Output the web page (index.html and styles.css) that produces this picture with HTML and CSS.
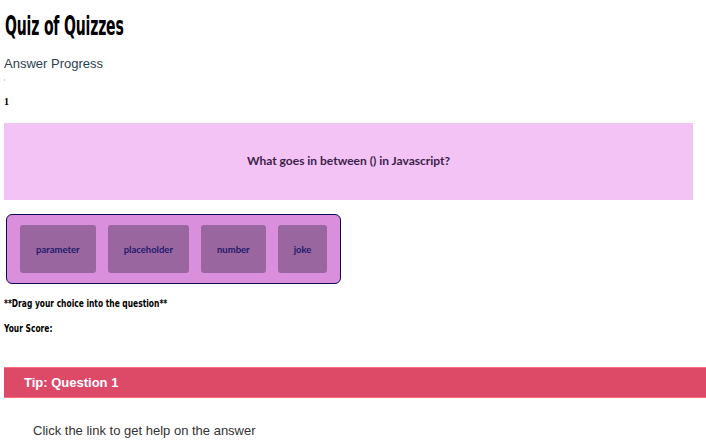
FILE: index.html
```html
<!DOCTYPE html>
<html lang="en">
<head>
<meta charset="utf-8">
<title>Quiz of Quizzes</title>
<link rel="stylesheet" href="styles.css">
</head>
<body>
<h1 class="title"><span class="condensed title-text">Quiz of Quizzes</span></h1>
<p class="progress-label">Answer Progress</p>
<div class="progress-bar"></div>
<p class="question-number">1</p>
<div class="question-box">
  <p class="question-text">What goes in between () in Javascript?</p>
</div>
<div class="choices">
  <div class="choice">parameter</div>
  <div class="choice">placeholder</div>
  <div class="choice">number</div>
  <div class="choice">joke</div>
</div>
<p class="hint"><span class="condensed small-text">**Drag your choice into the question**</span></p>
<p class="score"><span class="condensed small-text">Your Score:</span></p>
<div class="tip-bar">Tip: Question 1</div>
<p class="tip-body">Click the link to get help on the answer</p>
</body>
</html>
```
FILE: styles.css
```css
html, body {
  margin: 0;
  padding: 0;
  background: #ffffff;
}
body {
  padding: 0 0 0 4px;
  font-family: "Liberation Sans", Arial, sans-serif;
  overflow: hidden;
}
.condensed {
  display: inline-block;
  font-family: "DejaVu Sans Condensed", "DejaVu Sans", sans-serif;
  font-weight: bold;
  transform-origin: left center;
  white-space: nowrap;
}
.title {
  margin: 10px 0 0 1px;
  height: 32px;
  font-size: 26px;
  line-height: 32px;
  color: #000;
}
.title-text {
  transform: scaleX(0.6);
  letter-spacing: -0.3px;
}
.progress-label {
  margin: 14px 0 0 0;
  font-size: 13px;
  line-height: 16px;
  color: #2c3e50;
}
.progress-bar {
  margin-top: 7px;
  width: 1px;
  height: 2px;
  background: #b8d4e8;
}
.question-number {
  margin: 15px 0 0 0;
  font-family: "Liberation Serif", serif;
  font-weight: bold;
  font-size: 10px;
  line-height: 12px;
  color: #000;
}
.question-box {
  margin-top: 15px;
  width: 689px;
  height: 77px;
  background: #f3c3f5;
  display: flex;
  align-items: center;
  justify-content: center;
}
.question-text {
  margin: 0 0 2px 0;
  font-family: Lato, "Open Sans", sans-serif;
  font-weight: bold;
  font-size: 12px;
  color: #3b1e4a;
}
.choices {
  margin: 14px 0 0 2px;
  width: max-content;
  display: flex;
  gap: 12px;
  padding: 10px 13px;
  background: #d98fdb;
  border: 1px solid #0c0a52;
  border-radius: 6px;
}
.choice {
  height: 48px;
  display: flex;
  align-items: center;
  justify-content: center;
  padding: 0 16px;
  background: #9a669f;
  border-radius: 3px;
  font-family: Lato, "Open Sans", sans-serif;
  font-weight: bold;
  font-size: 9.5px;
  color: #1e1a6b;
}
.hint,
.score {
  height: 12px;
  font-size: 11px;
  line-height: 12px;
  color: #000;
}
.hint {
  margin: 13px 0 0 0;
}
.score {
  margin: 13px 0 0 0;
}
.small-text {
  transform: scaleX(0.76);
}
.tip-bar {
  margin-top: 33px;
  height: 29px;
  padding-left: 20px;
  background: #dc4a68;
  border-top: 1px solid #ff6b80;
  border-bottom: 1px solid #ff6b80;
  color: #ffffff;
  font-weight: bold;
  font-size: 13px;
  line-height: 29px;
}
.tip-body {
  margin: 25px 0 0 29px;
  font-size: 13px;
  line-height: 16px;
  color: #333;
}
```
